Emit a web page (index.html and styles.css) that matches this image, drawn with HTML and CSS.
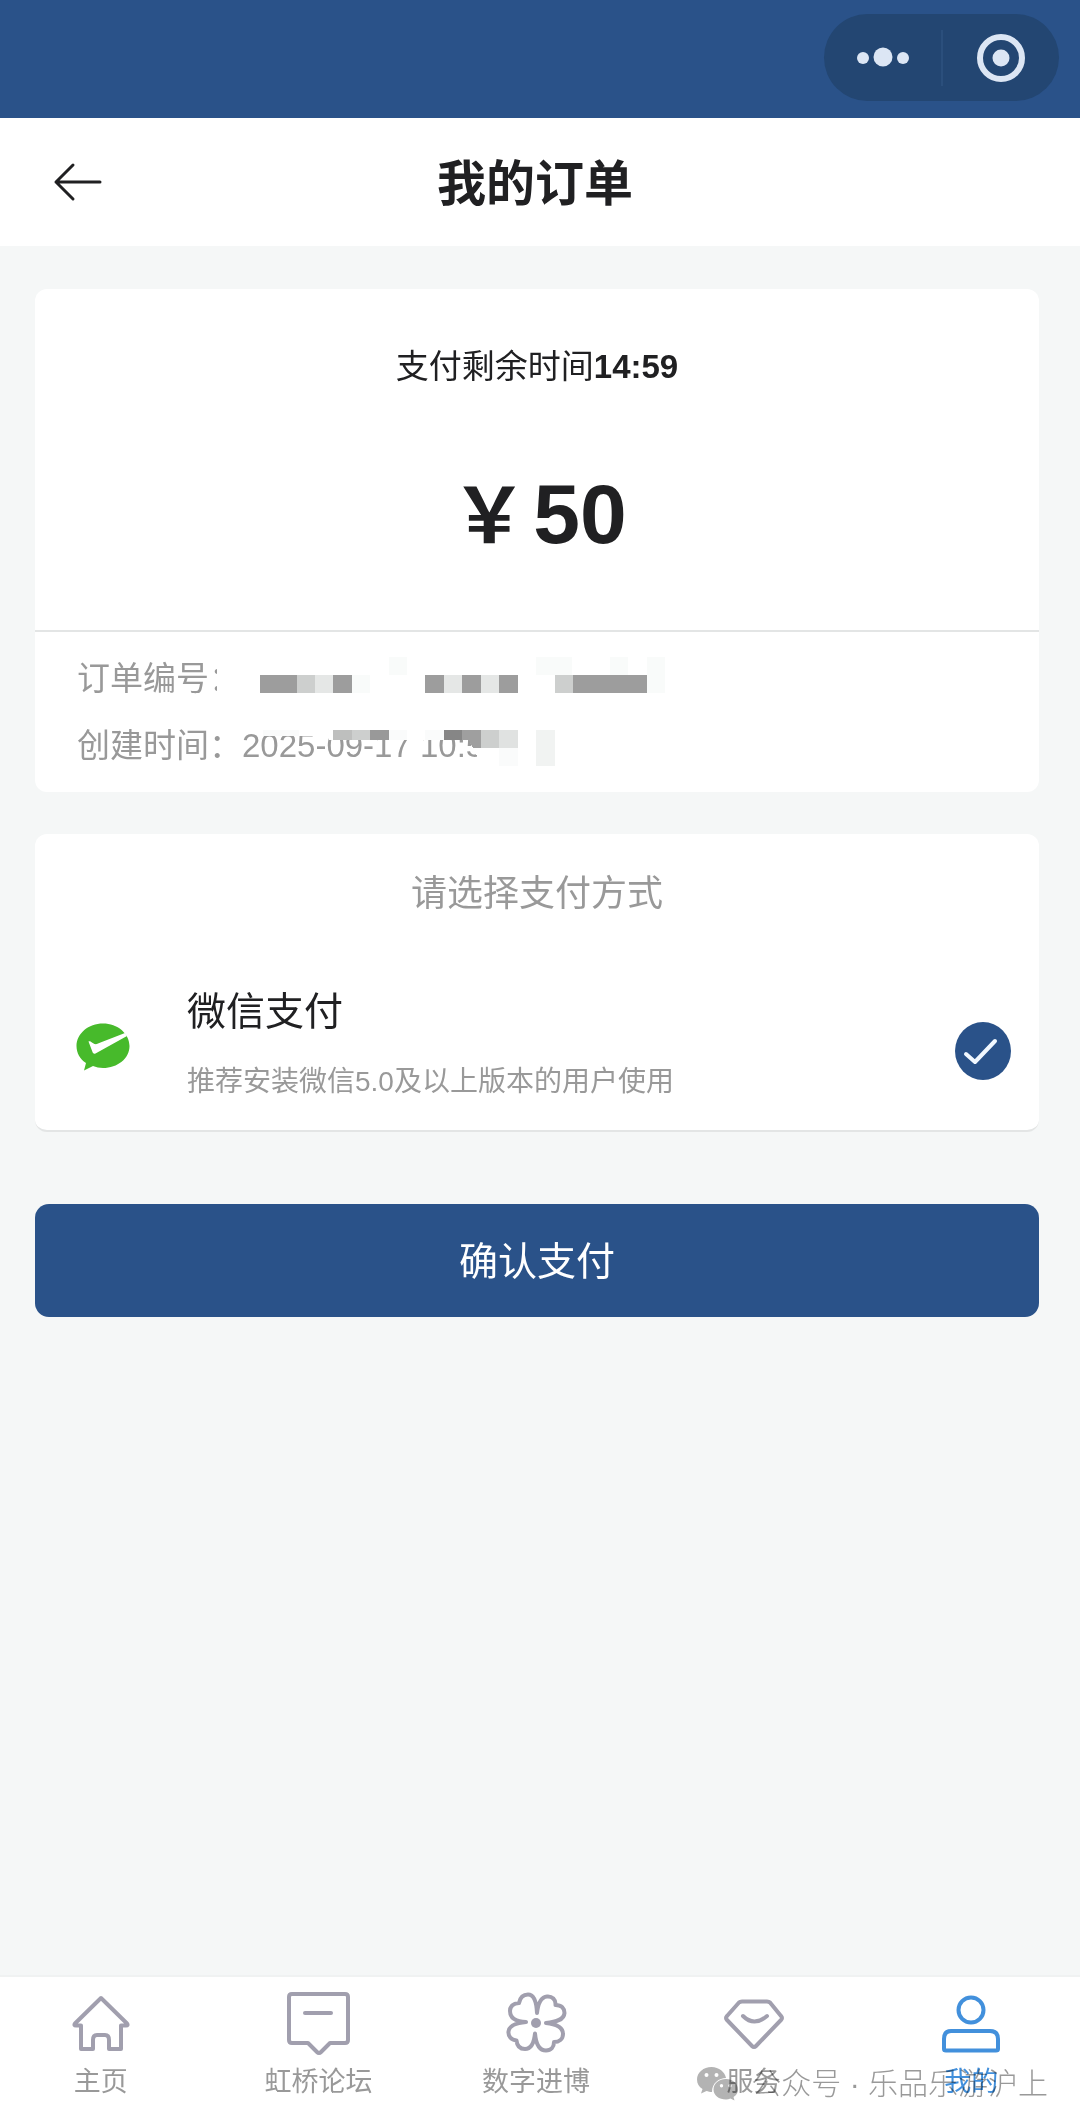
FILE: index.html
```html
<!DOCTYPE html>
<html lang="zh-CN">
<head>
<meta charset="utf-8">
<meta name="viewport" content="width=device-width, initial-scale=1">
<title>我的订单</title>
<link rel="stylesheet" href="styles.css">
</head>
<body>
<div class="page">
  <div class="statusbar">
    <div class="capsule">
      <button class="capsule-btn" type="button" aria-label="更多">
        <svg width="54" height="22" viewBox="0 0 54 22" fill="currentColor"><circle cx="8" cy="11" r="6"/><circle cx="28" cy="10" r="9.500"/><circle cx="48" cy="11" r="6"/></svg>
      </button>
      <span class="capsule-line"></span>
      <button class="capsule-btn" type="button" aria-label="关闭">
        <svg width="50" height="50" viewBox="0 0 50 50"><circle cx="25" cy="25" r="21" fill="none" stroke="currentColor" stroke-width="6"/><circle cx="25" cy="25" r="8.500" fill="currentColor"/></svg>
      </button>
    </div>
  </div>

  <header class="header">
    <button class="back" type="button" aria-label="返回">
      <svg width="50" height="40" viewBox="0 0 50 40" fill="none" stroke="currentColor" stroke-width="3" stroke-linecap="round" stroke-linejoin="round"><path d="M21 3 4 20l17 17M4 20h44"/></svg>
    </button>
    <h1 class="title">我的订单</h1>
  </header>

  <main class="main">
    <section class="card">
      <div class="summary">
        <p class="timer">支付剩余时间<strong>14:59</strong></p>
        <p class="amount"><span class="currency">￥</span>50</p>
      </div>
      <div class="details">
        <p>订单编号：</p>
        <p>创建时间：2025-09-17 10:5</p>
        <svg class="mosaic" width="640" height="158" viewBox="0 0 640 158" shape-rendering="crispEdges" aria-hidden="true">
          <path fill="#fff" d="M182 27h448v50H182zM228 96h210v12H294v-4h-66zM430 96h110v48h-88l-18-36z"/>
          <path fill="#f9fbfa" d="M354 25h18v18h-18zM501 25h36v18h-36zM575 25h18v18h-18zM612 25h18v36h-18zM317 43h18v18h-18z"/>
          <path fill="#9d9d9d" d="M225 43h37v18h-37zM298 43h19v18h-19zM390 43h19v18h-19zM427 43h19v18h-19zM464 43h19v18h-19zM538 43h74v18h-74z"/>
          <path fill="#cdcfce" d="M262 43h18v18h-18zM520 43h18v18h-18z"/>
          <path fill="#e5e7e6" d="M280 43h18v18h-18zM409 43h18v18h-18zM446 43h18v18h-18z"/>
          <path fill="#bebfbe" d="M298 98h19v10h-19z"/>
          <path fill="#cdcfce" d="M317 98h18v10h-18zM446 98h18v18h-18z"/>
          <path fill="#999" d="M335 98h19v10h-19z"/>
          <path fill="#868686" d="M409 98h18v10h-18z"/>
          <path fill="#9f9f9f" d="M427 98h19v18h-8l-4-8h-7z"/>
          <path fill="#e0e2e1" d="M464 98h19v18h-19z"/>
          <path fill="#f1f3f2" d="M501 98h19v36h-19z"/>
          <path fill="#fafbfb" d="M228 98h36v6h-36zM354 98h18v10h-18zM390 98h19v10h-19zM464 116h19v18h-19z"/>
        </svg>
      </div>
    </section>

    <section class="card methods">
      <h2 class="methods-title">请选择支付方式</h2>
      <label class="method">
        <svg class="method-icon" width="54" height="58" viewBox="0 0 54 58"><path fill="#47ba2b" d="M27 1.500C12.500 1.500.500 11.500.500 24c0 7 3.500 13 9.500 17l-2 7.500 9-4.500c3 1 6.500 2 10 2 14.500 0 26.500-9.500 26.500-22S41.500 1.500 27 1.500z"/><path fill="#fff" d="M12.500 19.500c2-1 4 2 6 2.500 2 .500 4-.500 6-1.500L49 11l2 3-31.500 17.500c-1.500.500-2.500 0-3-1.500z"/></svg>
        <span class="method-text">
          <span class="method-name">微信支付</span>
          <span class="method-note">推荐安装微信5.0及以上版本的用户使用</span>
        </span>
        <span class="radio">
          <input type="radio" name="pay" checked>
          <svg width="56" height="58" viewBox="0 0 56 58" fill="none" stroke="#f1f8ff" stroke-width="4" stroke-linecap="round" stroke-linejoin="round" aria-hidden="true"><path d="m11 32 9 8 20-21"/></svg>
        </span>
      </label>
    </section>

    <button class="confirm" type="button">确认支付</button>
  </main>

  <nav class="tabbar">
    <a class="tab" href="#home">
      <svg width="66" height="66" viewBox="0 0 66 66"><path d="M33 8 7 33.500q-1.500 2 1 2h5V59h12V50q0-5 4-5h8q4 0 4 5v9h12V35.500h5q2.500 0 1-2z"/></svg>
      <span>主页</span>
    </a>
    <a class="tab" href="#forum">
      <svg width="66" height="66" viewBox="0 0 66 66"><path d="M7 4h53q3 0 3 3v43q0 3-3 3H45L36 62q-2 2-4 0l-9-9H7q-3 0-3-3V7q0-3 3-3z"/><path d="M20 23h26"/></svg>
      <span>虹桥论坛</span>
    </a>
    <a class="tab" href="#digital">
      <svg width="66" height="66" viewBox="0 0 66 66"><path d="M34 23C35 14 38 7 44 6.500c5-.500 9 3 8.500 8.500 6 0 9 3.500 9 8C61 30 53 32 43 33c10 1 17 4 17 11 0 5-4 8-9 8 0 5-3 8.500-8 8.500-7 0-10-6-11-17-1 10-4 15.500-10 15.500-5 0-8-3-8.500-8.500C8 50 5 46 5.500 41.500 6 36 12 33 23 32 13 31.500 7 28 7 21c0-5 3.500-7.500 9-8 1-5 4-8.500 9-8.500 6 0 8.500 7.500 9 18.500z"/><circle class="solid" cx="33" cy="33" r="5"/></svg>
      <span>数字进博</span>
    </a>
    <a class="tab" href="#service">
      <svg width="66" height="66" viewBox="0 0 66 66"><path d="M21 11.500h25q2 0 3 1L60 26q2 2 0 4L35 56q-2 2-4 0L6 30q-2-2 0-4l12-13.500q1-1 3-1z"/><path d="M22 26q11 11 24 0"/></svg>
      <span>服务</span>
    </a>
    <a class="tab tab-active" href="#mine" aria-current="page">
      <svg width="66" height="66" viewBox="0 0 66 66"><circle cx="33" cy="20" r="12.500"/><path d="M13 41h39q8 0 8 8v10q0 1.500-2 1.500H8q-2 0-2-1.500V49q0-8 7-8z"/></svg>
      <span>我的</span>
    </a>
    <div class="watermark">
      <svg width="48" height="36" viewBox="0 0 48 36" aria-hidden="true"><path fill="#999" fill-rule="evenodd" d="M14.500 1C6.500 1 0 6.500 0 13.500c0 4 2 7.500 5.500 9.500L4 27.500l5.500-2.500c1.500.500 3.500 1 5.500 1C15 17 22 12 29 12 28 6 22 1 14.500 1zM9.500 7a2 2 0 1 1 0 4 2 2 0 0 1 0-4zm10 0a2 2 0 1 1 0 4 2 2 0 0 1 0-4z"/><path fill="#999" fill-rule="evenodd" d="M29 13c-7 0-12.500 4.500-12.500 10.500S22 33.500 29 33.500c1.500 0 3-.500 4.500-1l4 2-1-3.500c3-2 4.500-4.500 4.500-7.500 0-6-5.500-10.500-12-10.500zM24.500 18a1.700 1.700 0 1 1 0 3.400 1.700 1.700 0 0 1 0-3.400zm8.500 0a1.700 1.700 0 1 1 0 3.400 1.700 1.700 0 0 1 0-3.400z"/></svg>
      <span>公众号 · 乐品乐游沪上</span>
    </div>
  </nav>
</div>
</body>
</html>
```
FILE: styles.css
```css
* { box-sizing: border-box; }

body {
  margin: 0;
  color: #202022;
  background: #f5f7f7;
  font-family: "Liberation Sans", "Noto Sans CJK SC", sans-serif;
}

p, h1, h2 { margin: 0; }

button {
  border: 0;
  padding: 0;
  background: none;
  color: inherit;
  font: inherit;
}

svg { display: block; }

.page {
  display: flex;
  flex-direction: column;
  min-height: 100vh;
}

.statusbar {
  display: flex;
  justify-content: flex-end;
  padding: 14px 21px 17px;
  background: #2a5289;
}

.capsule {
  display: flex;
  align-items: center;
  width: 235px;
  height: 87px;
  border-radius: 44px;
  background: #234672;
  color: #dce6f4;
}

.capsule-btn {
  flex: 1;
  display: flex;
  justify-content: center;
}

.capsule-line {
  width: 2px;
  height: 56px;
  background: #2b4f7c;
}

.header {
  display: grid;
  grid-template-columns: 50px 1fr 50px;
  align-items: center;
  height: 128px;
  padding: 0 62px 0 52px;
  background: #fff;
}

.title {
  padding-top: 4px;
  text-align: center;
  font-size: 49px;
  line-height: 64px;
}

.main {
  flex: 1;
  display: flex;
  flex-direction: column;
  padding: 43px 41px 43px 35px;
}

.card {
  border-radius: 12px;
  background: #fff;
}

.summary {
  padding: 54px 0 66px;
  border-bottom: 2px solid #e3e5e5;
  text-align: center;
}

.timer {
  font-size: 33px;
  line-height: 48px;
}

.amount {
  margin-top: 73px;
  font-size: 84px;
  font-weight: bold;
  line-height: 100px;
}

.currency {
  padding: 0 6px 0 4px;
  font-size: 76px;
  line-height: 1px;
}

.details {
  position: relative;
  padding: 13px 42px;
  color: #999;
  font-size: 33px;
  line-height: 67px;
}

/* privacy mask over the order number and time */
.mosaic {
  position: absolute;
  top: 0;
  left: 0;
}

.methods {
  margin-top: 42px;
  padding: 36px 0 28px;
  border-bottom: 2px solid #e3e5e5;
}

.methods-title {
  color: #999;
  text-align: center;
  font-size: 36px;
  font-weight: normal;
  line-height: 48px;
}

.method {
  display: flex;
  align-items: center;
  margin-top: 66px;
  padding: 0 28px 0 41px;
}

.method-icon,
.radio { margin-top: 16px; }

.method-text {
  flex: 1;
  display: flex;
  flex-direction: column;
  gap: 22px;
  padding-left: 57px;
}

.method-name {
  font-size: 39px;
  line-height: 56px;
}

.method-note {
  color: #999;
  font-size: 28px;
  line-height: 40px;
}

.radio { display: grid; }

.radio input,
.radio svg { grid-area: 1 / 1; }

.radio svg { pointer-events: none; z-index: 1; }

.radio input {
  appearance: none;
  width: 56px;
  height: 58px;
  margin: 0;
  border-radius: 50%;
  background: #2a5289;
}

.confirm {
  height: 113px;
  margin-top: 72px;
  padding-bottom: 6px;
  border-radius: 14px;
  background: #2a5289;
  color: #fff;
  font-size: 39px;
}

.tabbar {
  position: relative;
  display: grid;
  grid-template-columns: repeat(5, 1fr);
  height: 151px;
  margin-left: -8px;
  border-top: 2px solid #f0f2f2;
  background: #fff;
}

.tab {
  display: flex;
  flex-direction: column;
  align-items: center;
  gap: 6px;
  padding-top: 13px;
  color: #999;
  font-size: 27px;
  line-height: 40px;
  text-decoration: none;
}

.tab svg {
  fill: none;
  stroke: #a19fae;
  stroke-width: 4;
  stroke-linecap: round;
  stroke-linejoin: round;
}

.tab .solid { fill: #a19fae; stroke: none; }

.tab-active { color: #4290dc; }

.tab-active svg { stroke: #4290dc; }

.watermark {
  position: absolute;
  right: 32px;
  bottom: 22px;
  display: flex;
  align-items: center;
  gap: 6px;
  color: #777;
  font-size: 30px;
  font-weight: 300;
  line-height: 40px;
  opacity: 0.75;
  mix-blend-mode: multiply;
  pointer-events: none;
}
```
